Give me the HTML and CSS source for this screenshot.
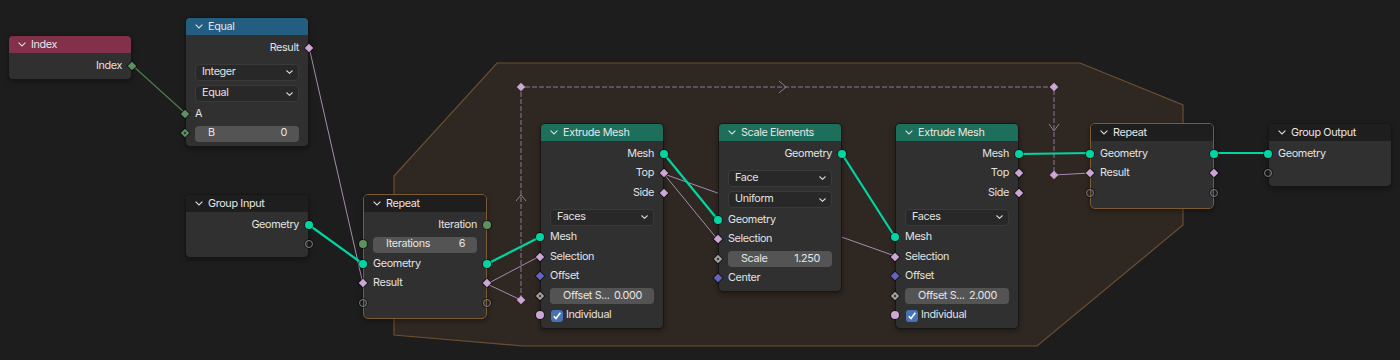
FILE: index.html
```html
<!DOCTYPE html>
<html lang="en">
  <head>
    <title>Repeat Zone</title>
    <link rel="stylesheet" href="styles.css">
  </head>
  <body>
    <div class="canvas">

      <svg class="wires" width="1400" height="360" viewBox="0 0 1400 360">
        <polygon class="zone" points="497,63 1080,63 1183,105 1183,225 1037,346 523,346 394,335 394,176"/>

        <line class="w-int" x1="132" y1="65" x2="185" y2="113"/>
        <line class="w-bool" x1="309" y1="47" x2="363" y2="284"/>
        <line class="w-bool" x1="487" y1="284" x2="540" y2="256"/>
        <line class="w-bool" x1="487" y1="284" x2="521" y2="300"/>
        <line class="w-bool" x1="664" y1="174" x2="718" y2="240"/>
        <line class="w-bool" x1="664" y1="174" x2="895" y2="256"/>
        <line class="w-bool" x1="1054" y1="175" x2="1090" y2="173"/>
        <polyline class="w-dash" points="521,300 521,87 1054,87 1054,175"/>
        <polyline class="w-arrow" points="516,201 521,195 526,201"/>
        <polyline class="w-arrow" points="779,81 786,87 779,93"/>
        <polyline class="w-arrow" points="1049,124 1054,131 1059,124"/>

        <line class="w-geo" x1="309" y1="225" x2="363" y2="264"/>
        <line class="w-geo" x1="487" y1="264" x2="540" y2="237"/>
        <line class="w-geo" x1="664" y1="154" x2="718" y2="220"/>
        <line class="w-geo" x1="842" y1="154" x2="895" y2="237"/>
        <line class="w-geo" x1="1019" y1="154" x2="1090" y2="153"/>
        <line class="w-geo" x1="1215" y1="153" x2="1268" y2="153"/>

        <rect class="reroute" x="-3" y="-3" width="6" height="6" transform="translate(521 300) rotate(45)"/>
        <rect class="reroute" x="-3" y="-3" width="6" height="6" transform="translate(521 87) rotate(45)"/>
        <rect class="reroute" x="-3" y="-3" width="6" height="6" transform="translate(1054 87) rotate(45)"/>
        <rect class="reroute" x="-3" y="-3" width="6" height="6" transform="translate(1054 175) rotate(45)"/>
      </svg>

      <!-- Index -->
      <div class="node n-index">
        <div class="hd input"><svg class="chev" width="8" height="5" viewBox="0 0 8 5"><path d="M.6.6 4 4 7.4.6"/></svg>Index</div>
        <div class="bd">
          <div class="row out">Index<i class="sk r dia int"></i></div>
        </div>
      </div>

      <!-- Equal -->
      <div class="node n-equal">
        <div class="hd conv"><svg class="chev" width="8" height="5" viewBox="0 0 8 5"><path d="M.6.6 4 4 7.4.6"/></svg>Equal</div>
        <div class="bd">
          <div class="row out">Result<i class="sk r dia bool"></i></div>
          <div class="gap"></div>
          <div class="row drow"><div class="drop">Integer<svg class="dchev" width="7" height="4" viewBox="0 0 7 4"><path d="M.5.5 3.5 3.3 6.5.5"/></svg></div></div>
          <div class="row drow"><div class="drop">Equal<svg class="dchev" width="7" height="4" viewBox="0 0 7 4"><path d="M.5.5 3.5 3.3 6.5.5"/></svg></div></div>
          <div class="row"><i class="sk l dia int"></i>A</div>
          <div class="row"><i class="sk l dia int dot"></i><div class="fld"><span>B</span><span>0</span></div></div>
        </div>
      </div>

      <!-- Group Input -->
      <div class="node n-gin">
        <div class="hd"><svg class="chev" width="8" height="5" viewBox="0 0 8 5"><path d="M.6.6 4 4 7.4.6"/></svg>Group Input</div>
        <div class="bd">
          <div class="row out">Geometry<i class="sk r geo"></i></div>
          <div class="row out"><i class="sk r empty"></i></div>
        </div>
      </div>

      <!-- Repeat input -->
      <div class="node zone-node n-rin">
        <div class="hd"><svg class="chev" width="8" height="5" viewBox="0 0 8 5"><path d="M.6.6 4 4 7.4.6"/></svg>Repeat</div>
        <div class="bd">
          <div class="row out">Iteration<i class="sk r int"></i></div>
          <div class="row"><i class="sk l int"></i><div class="fld"><span>Iterations</span><span>6</span></div></div>
          <div class="row"><i class="sk l geo"></i>Geometry<i class="sk r geo"></i></div>
          <div class="row"><i class="sk l dia bool"></i>Result<i class="sk r dia bool"></i></div>
          <div class="row"><i class="sk l empty"></i><i class="sk r empty"></i></div>
        </div>
      </div>

      <!-- Extrude Mesh 1 -->
      <div class="node n-ext1">
        <div class="hd geo-hd"><svg class="chev" width="8" height="5" viewBox="0 0 8 5"><path d="M.6.6 4 4 7.4.6"/></svg>Extrude Mesh</div>
        <div class="bd">
          <div class="row out">Mesh<i class="sk r geo"></i></div>
          <div class="row out">Top<i class="sk r dia bool"></i></div>
          <div class="row out">Side<i class="sk r dia bool"></i></div>
          <div class="gap"></div>
          <div class="row drow"><div class="drop">Faces<svg class="dchev" width="7" height="4" viewBox="0 0 7 4"><path d="M.5.5 3.5 3.3 6.5.5"/></svg></div></div>
          <div class="row"><i class="sk l geo"></i>Mesh</div>
          <div class="row"><i class="sk l dia bool"></i>Selection</div>
          <div class="row"><i class="sk l dia vec"></i>Offset</div>
          <div class="row"><i class="sk l dia flt dot"></i><div class="fld"><span>Offset S...</span><span>0.000</span></div></div>
          <div class="row"><i class="sk l bool"></i><span class="chk"><svg width="10" height="10" viewBox="0 0 10 10"><path d="M1.8 5.2 4 7.6 8.4 1.8"/></svg></span>Individual</div>
        </div>
      </div>

      <!-- Scale Elements -->
      <div class="node n-scale">
        <div class="hd geo-hd"><svg class="chev" width="8" height="5" viewBox="0 0 8 5"><path d="M.6.6 4 4 7.4.6"/></svg>Scale Elements</div>
        <div class="bd">
          <div class="row out">Geometry<i class="sk r geo"></i></div>
          <div class="gap"></div>
          <div class="row drow"><div class="drop">Face<svg class="dchev" width="7" height="4" viewBox="0 0 7 4"><path d="M.5.5 3.5 3.3 6.5.5"/></svg></div></div>
          <div class="row drow"><div class="drop">Uniform<svg class="dchev" width="7" height="4" viewBox="0 0 7 4"><path d="M.5.5 3.5 3.3 6.5.5"/></svg></div></div>
          <div class="row"><i class="sk l geo"></i>Geometry</div>
          <div class="row"><i class="sk l dia bool"></i>Selection</div>
          <div class="row"><i class="sk l dia flt dot"></i><div class="fld"><span>Scale</span><span>1.250</span></div></div>
          <div class="row"><i class="sk l dia vec"></i>Center</div>
        </div>
      </div>

      <!-- Extrude Mesh 2 -->
      <div class="node n-ext2">
        <div class="hd geo-hd"><svg class="chev" width="8" height="5" viewBox="0 0 8 5"><path d="M.6.6 4 4 7.4.6"/></svg>Extrude Mesh</div>
        <div class="bd">
          <div class="row out">Mesh<i class="sk r geo"></i></div>
          <div class="row out">Top<i class="sk r dia bool"></i></div>
          <div class="row out">Side<i class="sk r dia bool"></i></div>
          <div class="gap"></div>
          <div class="row drow"><div class="drop">Faces<svg class="dchev" width="7" height="4" viewBox="0 0 7 4"><path d="M.5.5 3.5 3.3 6.5.5"/></svg></div></div>
          <div class="row"><i class="sk l geo"></i>Mesh</div>
          <div class="row"><i class="sk l dia bool"></i>Selection</div>
          <div class="row"><i class="sk l dia vec"></i>Offset</div>
          <div class="row"><i class="sk l dia flt dot"></i><div class="fld"><span>Offset S...</span><span>2.000</span></div></div>
          <div class="row"><i class="sk l bool"></i><span class="chk"><svg width="10" height="10" viewBox="0 0 10 10"><path d="M1.8 5.2 4 7.6 8.4 1.8"/></svg></span>Individual</div>
        </div>
      </div>

      <!-- Repeat output -->
      <div class="node zone-node n-rout">
        <div class="hd"><svg class="chev" width="8" height="5" viewBox="0 0 8 5"><path d="M.6.6 4 4 7.4.6"/></svg>Repeat</div>
        <div class="bd">
          <div class="row"><i class="sk l geo"></i>Geometry<i class="sk r geo"></i></div>
          <div class="row"><i class="sk l dia bool"></i>Result<i class="sk r dia bool"></i></div>
          <div class="row"><i class="sk l empty"></i><i class="sk r empty"></i></div>
        </div>
      </div>

      <!-- Group Output -->
      <div class="node n-gout">
        <div class="hd"><svg class="chev" width="8" height="5" viewBox="0 0 8 5"><path d="M.6.6 4 4 7.4.6"/></svg>Group Output</div>
        <div class="bd">
          <div class="row"><i class="sk l geo"></i>Geometry</div>
          <div class="row"><i class="sk l empty"></i></div>
        </div>
      </div>

    </div>
  </body>
</html>
```

FILE: styles.css
```css
body {
  margin: 0;
  background-color: #1d1d1d;
  font-family: Inter, "Noto Sans", sans-serif;
}

.canvas {
  position: relative;
  width: 1400px;
  height: 360px;
  overflow: hidden;
}

/* links + zone */
.wires {
  position: absolute;
  left: 0;
  top: 0;
}
.zone {
  fill: #2f2721;
  stroke: #6c4f30;
  stroke-width: 1.2;
}
.w-geo {
  stroke: #00d6a3;
  stroke-width: 2.2;
}
.w-bool {
  stroke: #a68cae;
  stroke-width: 1;
}
.w-int {
  stroke: #4f7f52;
  stroke-width: 1.1;
}
.w-dash {
  fill: none;
  stroke: #8f7898;
  stroke-width: 1;
  stroke-dasharray: 5 2;
}
.w-arrow {
  fill: none;
  stroke: #8f7898;
  stroke-width: 1;
}
.reroute {
  fill: #cca6d6;
}

/* nodes */
.node {
  position: absolute;
  width: 124px;
  box-sizing: border-box;
  background-color: #303030;
  border: 1px solid #161616;
  border-radius: 5px;
  box-shadow: 0 2px 5px rgba(0, 0, 0, 0.35);
  color: #e2e2e2;
  font-size: 10.8px;
  letter-spacing: -0.35px;
  line-height: 1;
  white-space: nowrap;
}
.zone-node {
  border-color: #7b5a35;
}

.n-index { left: 8px; top: 35px; }
.n-equal { left: 185px; top: 17px; }
.n-gin { left: 185px; top: 194px; }
.n-rin { left: 363px; top: 194px; }
.n-ext1 { left: 540px; top: 123px; }
.n-scale { left: 718px; top: 123px; }
.n-ext2 { left: 895px; top: 123px; }
.n-rout { left: 1090px; top: 123px; }
.n-gout { left: 1268px; top: 123px; }

.hd {
  height: 17px;
  box-sizing: border-box;
  display: flex;
  align-items: center;
  gap: 5px;
  padding: 1px 0 0 9px;
  border-radius: 4px 4px 0 0;
  background-color: #1e1e1e;
  color: #e6e6e6;
}
.hd.input { background-color: #83314a; }
.hd.conv { background-color: #235e80; }
.hd.geo-hd { background-color: #1d6f5b; }

.chev {
  margin-top: -1px;
}
.chev path, .dchev path {
  fill: none;
  stroke: #dcdcdc;
  stroke-width: 1.1;
}

.bd {
  padding: 3px 0 3px;
}
.n-rin .bd, .n-rout .bd {
  padding-bottom: 5px;
}

.row {
  position: relative;
  height: 19.5px;
  box-sizing: border-box;
  display: flex;
  align-items: center;
  padding: 1px 9px 0;
}
.row.out {
  justify-content: flex-end;
}
.row.drow {
  height: 21.5px;
}
.gap {
  height: 3.5px;
}

/* sockets */
.sk {
  position: absolute;
  top: 50%;
  width: 8px;
  height: 8px;
  margin-top: -4px;
  border-radius: 50%;
  box-sizing: border-box;
  box-shadow: 0 0 0 1px rgba(0, 0, 0, 0.45);
}
.sk.l { left: -5px; }
.sk.r { right: -5px; }
.sk.dia {
  width: 6px;
  height: 6px;
  margin-top: -3px;
  border-radius: 0;
  transform: rotate(45deg);
}
.sk.dia.l { left: -4px; }
.sk.dia.r { right: -4px; }
.sk.dot::after {
  content: "";
  position: absolute;
  left: 2px;
  top: 2px;
  width: 2px;
  height: 2px;
  background-color: #2a2a2a;
}

.geo { background-color: #00d6a3; }
.bool { background-color: #cca6d6; }
.int { background-color: #5d9160; }
.vec { background-color: #6363c7; }
.flt { background-color: #a1a1a1; }
.empty {
  background-color: transparent;
  border: 1.5px solid #7a7a7a;
}

/* widgets */
.drop {
  flex: 1;
  height: 17px;
  box-sizing: border-box;
  display: flex;
  align-items: center;
  justify-content: space-between;
  padding: 0 5px 0 6px;
  background-color: #282828;
  border: 1px solid #3a3a3a;
  border-radius: 4px;
}
.fld {
  flex: 1;
  height: 16px;
  box-sizing: border-box;
  display: flex;
  align-items: center;
  justify-content: space-between;
  padding: 0 12px 0 13px;
  background-color: #545454;
  border-radius: 4px;
  color: #e6e6e6;
}
.chk {
  width: 12px;
  height: 12px;
  margin: 0 3px 0 1px;
  display: flex;
  align-items: center;
  justify-content: center;
  background-color: #4772b3;
  border-radius: 3px;
}
.chk path {
  fill: none;
  stroke: #ffffff;
  stroke-width: 1.6;
}
```
